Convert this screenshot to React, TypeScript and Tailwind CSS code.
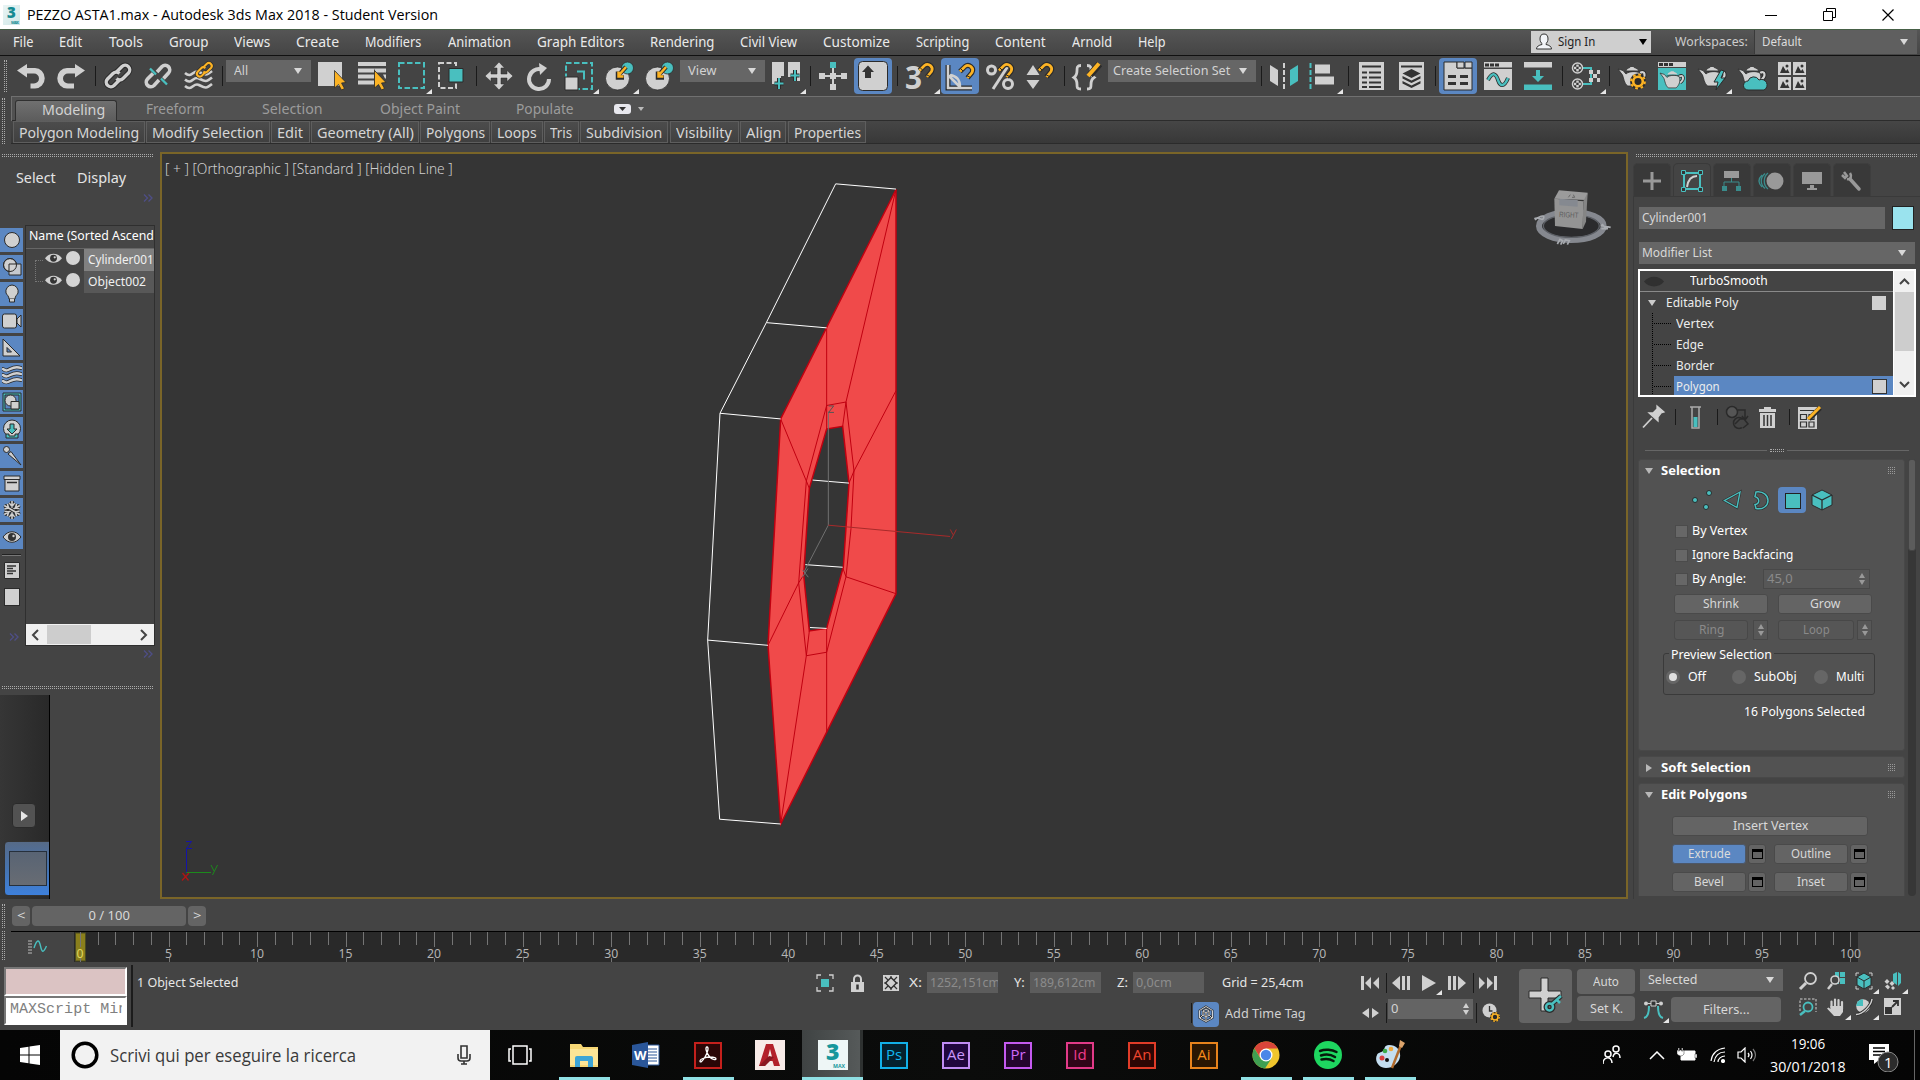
import { useLayoutEffect, useRef, useState } from "react";
import type { ReactNode } from "react";

const L = "#d0d0d0";
const D = "#2b2b2b";
const T = "#49bfbf";
const Y = "#fcb324";

/* Single line of text stretched to a given width */
function Fit({ w, children, className = "" }: { w: number; children: ReactNode; className?: string }) {
  const ref = useRef<HTMLSpanElement>(null);
  const [s, setS] = useState(1);
  useLayoutEffect(() => {
    if (ref.current && ref.current.offsetWidth) setS(w / ref.current.offsetWidth);
  }, [w]);
  return (
    <span className={"block shrink-0 whitespace-pre " + className} style={{ width: w }}>
      <span ref={ref} className="inline-block origin-left" style={{ transform: `scaleX(${s})` }}>
        {children}
      </span>
    </span>
  );
}

type Item = [number, number, ReactNode];

/* Flex row whose gaps come from the start and width of each item */
function Strip({ items, from = 0, className = "" }: { items: Item[]; from?: number; className?: string }) {
  let cur = from;
  return (
    <div className={"flex items-center " + className}>
      {items.map(([x, w, n], i) => {
        const m = x - cur;
        cur = x + w;
        return (
          <div key={i} className="flex shrink-0 items-center justify-center" style={{ marginLeft: m, width: w }}>
            {n}
          </div>
        );
      })}
    </div>
  );
}

const tx = (a: number, b: number, s: string, cls = ""): Item => [a, b - a, <Fit w={b - a} className={cls}>{s}</Fit>];

function Ic({ w = 28, h = 28, vb, fly, children }: { w?: number; h?: number; vb?: string; fly?: boolean; children: ReactNode }) {
  return (
    <div className="relative shrink-0">
      <svg width={w} height={h} viewBox={vb ?? `0 0 ${w} ${h}`} className="block overflow-visible" fill="none">
        {children}
      </svg>
      {fly && (
        <svg width="6" height="5" className="absolute -right-[6px] -bottom-[4px]" viewBox="0 0 6 5">
          <path d="M6 0V5H0Z" fill="#e6e6e6" />
        </svg>
      )}
    </div>
  );
}

const sep = (x: number, h = "h-5"): Item => [x, 2, <div className={"w-px bg-[#1a1a1a] " + h} />];
const Tri = ({ c = "#d8d8d8" }: { c?: string }) => (
  <svg width="8" height="6" viewBox="0 0 8 6"><path d="M0 0H8L4 6Z" fill={c} /></svg>
);
const GripV = ({ className = "" }: { className?: string }) => (
  <div className={"flex gap-px " + className}>
    <i className="w-px border-l border-dotted border-[#aaa]" /><i className="w-px border-l border-dotted border-[#aaa]" />
  </div>
);

const Chain = ({ c = L }: { c?: string }) => (
  <g>
    {[D, c].map((k, i) => (
      <g key={i} stroke={k} strokeWidth={i ? 3.4 : 5.4} fill="none">
        <path d="M12.5 10L18 4.5a4.6 4.6 0 0 1 6.5 6.5L19 16.500a4.600 4.600 0 0 1-6.500 0" />
        <path d="M15.500 18L10 23.500a4.600 4.600 0 0 1-6.500-6.500L9 11.500a4.600 4.600 0 0 1 6.500 0" />
      </g>
    ))}
  </g>
);
const Magnet = ({ x = 0, y = 0 }: { x?: number; y?: number }) => (
  <g transform={`translate(${x} ${y})`}>
    <path d="M1 8.500L6 3.500a4.700 4.700 0 0 1 7 6L8.500 15" stroke={D} strokeWidth="5" />
    <path d="M1 8.500L6 3.500a4.700 4.700 0 0 1 7 6L8.500 15" stroke={Y} strokeWidth="2.700" />
    <path d="M1.500 5.500l2.500 2.500M7.500 12.500l4 2" stroke={D} strokeWidth="1" />
  </g>
);
const Cursor = () => <path d="M16.500 8.500V26L20.500 22.500L23.500 28L26.500 26.500L23.500 21L28 20.500Z" fill={Y} stroke={D} strokeWidth=".8" />;
const Pot = () => (
  <g>
    <path d="M22 11c5-3 6.500 3 1 7" stroke={D} strokeWidth="4" />
    <path d="M22 11c5-3 6.500 3 1 7" stroke={L} strokeWidth="2.200" />
    <path d="M0 7l5 1.500L8 12c3-3 11-3 14-1c2 5 0 10-3.500 13h-9C6 21 6 17 4.500 13Z" fill={L} stroke={D} strokeWidth=".8" />
    <path d="M8.500 8.500C9 6.500 12 6.500 12.500 5h3c.5 1.500 4 1.500 4.500 3.500Z" fill={L} />
    <path d="M7.500 10.300C10 9 19 9 21.500 10.300" stroke={D} strokeWidth=".7" />
  </g>
);
const Gear = ({ x, y, r }: { x: number; y: number; r: number }) => (
  <g>
    <circle cx={x} cy={y} r={r} stroke={Y} strokeWidth={r * 0.55} />
    <circle cx={x} cy={y} r={r * 1.45} stroke={Y} strokeWidth={r * 0.4} strokeDasharray={`${r * 0.57} ${r * 0.57}`} />
  </g>
);
const Place = () => (
  <g>
    <ellipse cx="12.500" cy="16.500" rx="12" ry="11.500" fill={L} stroke={D} strokeWidth=".8" />
    <circle cx="22.500" cy="6" r="6" fill={T} stroke={D} strokeWidth=".8" />
    <path d="M21 5l-6 6.500M13 9.500v6h6" stroke={D} strokeWidth="4.500" />
    <path d="M21 5l-7 8M13.500 9.500v5h5" stroke={Y} strokeWidth="2.500" />
  </g>
);
const Combo = ({ w, tw, label }: { w: string; tw: number; label: string }) => (
  <div className={"flex h-[22px] -translate-y-[5px] items-center justify-between bg-[#666] pr-[9px] pl-2 text-[13px] text-[#d2d2d2] " + w}>
    <Fit w={tw}>{label}</Fit>
    <Tri />
  </div>
);
const Active = ({ children }: { children: ReactNode }) => (
  <div className="flex h-9 w-[38px] items-center justify-center rounded-[4px] bg-[#5b87c2]">{children}</div>
);

const toolbar: Item[] = [
  [3, 4, <GripV className="h-8" />],
  [17, 28, <Ic><path d="M0 8.500L10 2v4h8a9.500 10 0 0 1 0 20.500h-4.500v-5H17a5 5 0 0 0 0-10h-7v4Z" fill={L} /></Ic>],
  [57, 28, <Ic><path d="M28 8.500L18 2v4h-8a9.500 10 0 0 0 0 20.500h7v-5h-6a5 5 0 0 1 0-10h7v4Z" fill={L} /></Ic>],
  sep(94),
  [104, 28, <Ic><Chain /></Ic>],
  [144, 28, <Ic><g stroke={L} strokeWidth="3.600"><path d="M13 10L18 4.500a4.600 4.600 0 0 1 6.500 6.500L19.500 16.500M15 18L10 23.500a4.600 4.600 0 0 1-6.500-6.500L9 11.500" /></g><path d="M6 6.500l6 6M17 16.500l6 6" stroke={T} strokeWidth="2.300" /></Ic>],
  [184, 28, <Ic><g stroke={L} strokeWidth="2.600">{[12, 18.500, 25].map((y) => <path key={y} d={`M1 ${y - 1}c7 6 8-4 14-1s7 4 13-1`} />)}</g><g transform="translate(11.500 -1) scale(.63)"><Chain c={Y} /></g></Ic>],
  sep(221),
  [226, 85, <Combo w="w-[85px]" tw={14} label="All" />],
  [318, 28, <Ic><path d="M0 0h24v24H0z" fill={L} /><Cursor /></Ic>],
  [358, 28, <Ic><path d="M0 0h28v4H0zM0 6.500h16v4H0zM0 12.500h16v4H0zM0 18.500h16v4H0zM16 6.500h12v4H18zM25 12.500h3v4h-1z" fill={L} /><Cursor /></Ic>],
  [398, 28, <Ic fly><path d="M1 1h25v25H1z" stroke={T} strokeWidth="2" strokeDasharray="5.500 2.500" /></Ic>],
  [438, 28, <Ic><path d="M1 1h17v25H1z" stroke={L} strokeWidth="2" strokeDasharray="5 2.500" /><path d="M11 6.500h14V20H11z" fill={T} stroke={D} /></Ic>],
  sep(475),
  [485, 28, <Ic><path d="M14 0l5.500 6H16v6h6V8.500l6 5.500-6 5.500V16h-6v6h3.500L14 28l-5.500-6H12v-6H6v3.500L0 14l6-5.500V12h6V6H8.500Z" fill={L} stroke={D} strokeWidth=".5" /></Ic>],
  [525, 28, <Ic><path d="M17 7.500A10 10 0 1 0 24 17" stroke={L} strokeWidth="4" /><path d="M14 1l8 5-7 7Z" fill={L} /></Ic>],
  [565, 28, <Ic fly><path d="M1 1h26v26H1z" stroke={T} strokeWidth="2" strokeDasharray="5.500 2.500" /><path d="M0 15h13v13H0z" fill={L} stroke={D} /><path d="M12 9.500h7v8" stroke={T} strokeWidth="2" /></Ic>],
  [605, 28, <Ic fly><Place /></Ic>],
  [645, 28, <Ic><Place /></Ic>],
  [680, 85, <Combo w="w-[85px]" tw={28} label="View" />],
  [772, 28, <Ic fly><path d="M0 0h12v14H9v5H5v3H0zM16 0h12v19h-3v-4h-9z" fill={L} /><path d="M7 16v11M2.500 21.500h9M23 8v11M18.500 13.500h9" stroke={D} strokeWidth="4" /><path d="M7 16v11M2.500 21.500h9M23 8v11M18.500 13.500h9" stroke={T} strokeWidth="2" /></Ic>],
  sep(809),
  [819, 28, <Ic><path d="M3 14h22M14 4v22" stroke={L} strokeWidth="2" /><path d="M0 11h6v6H0zM22 11h6v6h-6zM11 22h6v6h-6zM11 11h6v6h-6z" fill={L} /><path d="M11 0h6v6h-6z" fill={T} /></Ic>],
  [854, 38, <Active><Ic w={30} h={30}><rect x=".5" y=".5" width="29" height="29" rx="4" fill={L} stroke={D} /><path d="M10 4.500l6 6.500h-3v6H7v-6H4Z" fill="#333" /></Ic></Active>],
  sep(896),
  [906, 28, <Ic fly><text x="-1" y="27" className="font-['Open_Sans'] text-[32px] font-bold" fill={L} textLength="17" lengthAdjust="spacingAndGlyphs">3</text><Magnet x={12.500} /></Ic>],
  [941, 38, <Active><Ic><path d="M2 3v23h24" stroke={D} strokeWidth="5" /><path d="M2 3v24M1 26h25M2 13l12 12M4 13c7 1 10 6 10 12" stroke={L} strokeWidth="2.500" /><Magnet x={13} y={1} /></Ic></Active>],
  [986, 28, <Ic><circle cx="5.500" cy="8" r="4" stroke={L} strokeWidth="3" /><circle cx="22" cy="22" r="4.500" stroke={L} strokeWidth="3" /><path d="M22 4L7 27" stroke={L} strokeWidth="3" /><Magnet x={12} /></Ic>],
  [1026, 28, <Ic><path d="M7 3l6.500 10H.5ZM7 27L.5 18h13Z" fill={L} /><Magnet x={12} /></Ic>],
  sep(1063),
  [1073, 28, <Ic><path d="M8 3.500c-4 0-4 2-4 5s0 5-3 7c3 2 3 4 3 7s0 4.500 4 4.500M14 3.500c4 0 4 2 4 5s0 5 3 7c-3 2-3 4-3 7s0 4.500-4 4.500" stroke={L} strokeWidth="2.800" /><path d="M26.500 2L17 13" stroke={D} strokeWidth="7" /><path d="M26 1.500L15 14" stroke={Y} strokeWidth="4" /></Ic>],
  [1108, 148, <div className="flex h-[22px] w-[148px] -translate-y-[5px] items-center justify-between bg-[#666] pr-[9px] pl-[5px] text-[13px] text-[#d2d2d2]"><Fit w={117}>Create Selection Set</Fit><Tri /></div>],
  sep(1260),
  [1270, 28, <Ic><path d="M0 3l8 5v16l-8-5Z" fill={L} /><path d="M14 1v26" stroke={L} strokeWidth="2" strokeDasharray="5 2" /><path d="M28 3l-8 5v16l8-5Z" fill={T} /></Ic>],
  [1309, 28, <Ic fly><path d="M1.500 1v26" stroke={T} strokeWidth="2" strokeDasharray="5 2" /><path d="M6 2.500h15v9H6zM6 14.500h19v8H6z" fill={L} /></Ic>],
  sep(1347),
  [1359, 25, <Ic w={25}><path d="M0 0h25v28H0z" fill={L} /><path d="M3 4.500h19" stroke="#333" strokeWidth="2" /><path d="M3 10.500h5M3 15.500h5M3 20.500h5M3 25h5M10 10.500h12M10 15.500h12M10 20.500h12M10 25h12" stroke="#333" strokeWidth="2" /></Ic>],
  [1399, 25, <Ic w={25}><path d="M0 0h25v28H0z" fill={L} /><path d="M2 4.500h21" stroke="#333" strokeWidth="2" /><path d="M12.500 7l9 4.500-9 4.500-9-4.500ZM3.500 14l9 4.500 9-4.500v2.500l-9 4.500-9-4.500ZM3.500 19l9 4.500 9-4.500v2.500l-9 4.500-9-4.500Z" fill="#333" /></Ic>],
  sep(1434),
  [1439, 38, <Active><Ic w={30} h={30}><path d="M1 1h13v6h15v22H1Z" fill={L} stroke={D} /><path d="M14 1h7v6h-7zM22 1h7v6h-7z" fill={L} stroke={D} /><path d="M5 14h8v3H5zM17 14h8v3h-8zM5 21h8v3H5zM17 21h8v3h-8z" fill="#333" /></Ic></Active>],
  [1484, 28, <Ic><path d="M0 0h28v5.500H0zM0 7h28v21H0z" fill={L} /><path d="M1 1.500h4v3H1zM6 1.500h4v3H6zM11 1.500h4v3h-4z" fill="#333" /><path d="M4 18c5-9 8-6 10 0s6 8 10-2" stroke={D} strokeWidth="4" /><path d="M4 18c5-9 8-6 10 0s6 8 10-2" stroke={T} strokeWidth="2.400" /></Ic>],
  [1524, 28, <Ic><path d="M0 0h28v5.500H0z" fill={L} /><path d="M0 22.500h28V28H0z" fill={T} /><path d="M12 8h4v6h4l-6 6-6-6h4z" fill={T} /></Ic>],
  sep(1561),
  [1572, 28, <Ic fly><path d="M11 6h8v16h-8" stroke={T} strokeWidth="2" /><circle cx="5.500" cy="6" r="5" fill="#333" stroke={L} strokeWidth="1.500" /><circle cx="5.500" cy="22" r="5" fill="#333" stroke={L} strokeWidth="1.500" /><path d="M2 6h7M5.500 2.500v7M2 22h7M5.500 18.500v7" stroke={L} strokeWidth="2.500" strokeDasharray="2.300" /><path d="M17 8h4v4h-4zM25 8h3v4h-3zM21 12h4v4h-4zM17 16h4v4h-4zM25 16h3v4h-3z" fill={L} /></Ic>],
  sep(1608),
  [1618, 28, <Ic><Pot /><circle cx="20" cy="19.500" r="8" fill={D} /><Gear x={20} y={19.500} r={4.800} /></Ic>],
  [1658, 28, <Ic><path d="M0 0h28v5H0z" fill={L} /><path d="M0 6h28v22H0z" fill={T} /><path d="M1 1h4v3H1zM6 1h4v3H6zM11 1h4v3h-4z" fill="#333" /><g transform="translate(2 5) scale(.87)"><Pot /></g></Ic>],
  [1698, 28, <Ic fly><Pot /><path d="M23 8l-7 12h4l-2 8 9-12h-4l3-7Z" fill={T} stroke={D} /></Ic>],
  [1738, 28, <Ic><Pot /><path d="M10 28a4.500 4.500 0 0 1 0-9a6 6 0 0 1 11-1a5 5 0 0 1 5 10Z" fill={T} stroke={D} /></Ic>],
  [1778, 28, <Ic>{[0, 15].map((x) => [0, 15].map((y) => <g key={x + "-" + y} transform={`translate(${x} ${y})`}><path d="M0 0h13v13H0z" fill={L} /><path d="M2 11L5 4l3 5 1.500-2 2 4z" fill="#333" /><circle cx="9" cy="4" r="1.500" fill="#333" /></g>))}</Ic>],
];

const menus: Item[] = [
  tx(13, 33, "File"), tx(59, 82, "Edit"), tx(109, 143, "Tools"), tx(169, 208, "Group"), tx(234, 270, "Views"),
  tx(296, 339, "Create"), tx(365, 421, "Modifiers"), tx(448, 511, "Animation"), tx(537, 624, "Graph Editors"),
  tx(650, 714, "Rendering"), tx(740, 797, "Civil View"), tx(823, 890, "Customize"), tx(916, 969, "Scripting"),
  tx(995, 1046, "Content"), tx(1072, 1112, "Arnold"), tx(1138, 1166, "Help"),
  [1531, 120, <div className="flex h-[22px] w-[120px] items-center bg-[#cfcfcf] pr-1 pl-[5px] text-[#222]">
    <svg width="16" height="17" viewBox="0 0 16 17"><path d="M8 1c3 0 4 2 4 5 0 2-1 4-2 4.500v1c3 .5 5.500 2 5.500 4.500H.5c0-2.500 2.500-4 5.500-4.500v-1C5 10 4 8 4 6c0-3 1-5 4-5Z" fill="#f2f4f8" stroke="#333" /></svg>
    <Fit w={37} className="ml-[6px] text-[13px] font-['Noto_Sans']">Sign In</Fit><span className="ml-auto"><Tri c="#000" /></span></div>],
  tx(1675, 1748, "Workspaces:", "text-[13px] text-[#ccc]"),
  [1754, 163, <div className="flex h-6 w-[163px] items-center justify-between border-l border-[#3a3a3a] bg-[#5f5f5f] pr-[9px] pl-[7px] text-[13px] text-[#ddd]"><Fit w={40}>Default</Fit><Tri /></div>],
];

const ribbon: [number, number, number, number, string][] = [
  [13, 145, 19, 139, "Polygon Modeling"], [146, 270, 152, 264, "Modify Selection"], [271, 310, 277, 303, "Edit"],
  [311, 419, 317, 414, "Geometry (All)"], [420, 490, 426, 485, "Polygons"], [491, 543, 497, 537, "Loops"],
  [544, 579, 550, 572, "Tris"], [580, 668, 586, 662, "Subdivision"], [670, 739, 676, 732, "Visibility"],
  [740, 786, 746, 781, "Align"], [788, 866, 794, 861, "Properties"],
];

const DotsH = ({ className = "" }: { className?: string }) => (
  <div className={"flex h-[3px] flex-col justify-between " + className}>
    <i className="block h-px border-t border-dotted border-[#aaa]" />
    <i className="block h-px border-t border-dotted border-[#aaa]" />
  </div>
);
const More = ({ className = "" }: { className?: string }) => (
  <svg width="10" height="8" viewBox="0 0 10 8" fill="none" stroke="#4e4e86" strokeWidth="1.300" className={"block shrink-0 " + className}>
    <path d="M1 .5L4.500 4 1 7.500M5.500 .5L9 4 5.500 7.500" />
  </svg>
);
const Eye = ({ w = 18, o = false }: { w?: number; o?: boolean }) => (
  <svg width={w} height={w * 0.62} viewBox="0 0 18 11" className="block shrink-0">
    <path d="M0 5.500C5-1 13-1 18 5.500C13 12 5 12 0 5.500Z" fill={L} stroke={o ? D : "none"} />
    <circle cx="9" cy="5.500" r="3.600" fill="#333" /><circle cx="10.300" cy="4.500" r="1.200" fill={L} />
  </svg>
);

const filters: ReactNode[] = [
  <circle cx="10" cy="10" r="7.500" fill={L} stroke={D} />,
  <g fill={L} stroke={D}><circle cx="8" cy="8" r="6.500" /><path d="M7 7h12v11H7z" fillOpacity=".9" /><circle cx="8" cy="8" r="6.500" fill="none" /></g>,
  <g fill={L} stroke={D}><path d="M10 1a6.500 6.500 0 0 1 6 8c-.8 2-3 3-3 6H7c0-3-2.200-4-3-6a6.500 6.500 0 0 1 6-8Z" /><path d="M7.500 15v3h5v-3" /></g>,
  <g fill={L} stroke={D}><rect x=".5" y="3" width="14" height="14" rx="2" /><path d="M15 8l4-4v12l-4-4Z" /></g>,
  <path d="M1 1v17h17ZM5 9.500L9.500 14H5Z" fill={L} stroke={D} fillRule="evenodd" />,
  <g strokeLinecap="round">{[4, 10, 16].map((y) => <g key={y}><path d={`M1 ${y}c6 5 8-5 18-1`} stroke={D} strokeWidth="4" /><path d={`M1 ${y}c6 5 8-5 18-1`} stroke={L} strokeWidth="2.400" /></g>)}</g>,
  <g stroke={D}><path d="M1 1h18v18H1z" fill={T} /><path d="M3 3h14v14H3z" fill="#5b87c2" /><circle cx="8.500" cy="8.500" r="5.500" fill={L} /><path d="M9 9.500h8V17H9z" fill={L} /></g>,
  <g stroke={D}><circle cx="10" cy="9.500" r="8.500" fill={L} /><path d="M4 15v4h12v-4h-3v2H7v-2Z" fill={T} /><path d="M8 5h4v5h3l-5 5-5-5h3Z" fill={T} /></g>,
  <g fill={L} stroke={D}><path d="M6 8L9 5.500L19 19Z" /><circle cx="4.500" cy="3.500" r="3" /></g>,
  <g fill={L} stroke={D}><path d="M3 6h14v12H3z" /><path d="M2 3h16v3.500H2z" /><path d="M5 9.500h10" strokeWidth="1.500" /></g>,
  <g>{[0, 60, 120].map((a) => <g key={a} transform={`rotate(${a} 10 10)`}><path d="M10 1v18M7 3l3 3 3-3M7 17l3-3 3 3" stroke={D} strokeWidth="3.400" /><path d="M10 1v18M7 3l3 3 3-3M7 17l3-3 3 3" stroke={L} strokeWidth="1.600" /></g>)}</g>,
  <g><path d="M1 10C6 3 14 3 19 10C14 17 6 17 1 10Z" fill={L} stroke={D} /><circle cx="10" cy="10" r="4" fill="#333" /><circle cx="11.500" cy="9" r="1.200" fill={L} /></g>,
];

function LeftPanel() {
  return (
    <div className="flex w-[160px] shrink-0 flex-col overflow-hidden">
      <DotsH className="mt-[10px] ml-[2px] w-[151px]" />
      <Strip className="mt-[10px] h-[20px] text-[15px] text-[#e4e4e4]" items={[tx(16, 56, "Select"), tx(77, 126, "Display")]} />
      <More className="mt-[7px] ml-[143px]" />
      <div className="mt-[23px] flex h-[421px]">
        <div className="flex w-[23px] shrink-0 flex-col pt-[3px]">
          {filters.map((f, i) => (
            <div key={i} className="mb-[3px] flex h-6 w-[23px] shrink-0 items-center justify-center bg-[#5b87c2]">
              <svg width="20" height="20" viewBox="0 0 20 20" fill="none">{f}</svg>
            </div>
          ))}
          <div className="mt-[2px] ml-[2px] h-[2px] w-[19px] border-t border-[#222] bg-[#777]" />
          <svg width="16" height="17" className="mt-[6px] ml-1 block shrink-0" viewBox="0 0 16 17"><path d="M.5.5h15v16H.5z" fill={L} stroke={D} /><path d="M3 4h9M3 6.500h6M3 9h9M3 11.500h6" stroke="#333" strokeWidth="1.300" /></svg>
          <div className="mt-[9px] ml-1 h-[18px] w-4 shrink-0 border border-[#2b2b2b] bg-[#d0d0d0]" />
          <More className="mt-[27px] ml-[9px]" />
        </div>
        <div className="ml-[2px] flex w-[130px] flex-col border border-[#2f2f2f]">
          <div className="flex h-[23px] shrink-0 items-center overflow-hidden border-b border-[#666] bg-[#464646] pb-[3px] pl-[3px] text-[13px] text-white">
            <Fit w={125}>Name (Sorted Ascend</Fit>
          </div>
          {[["Cylinder001", 66, "bg-[#808080]"], ["Object002", 58, "bg-[#585858]"]].map(([n, w, c], i) => (
            <div key={i} className="flex h-[22px] shrink-0 items-center">
              <div className={"ml-[9px] h-[22px] w-[8px] border-l border-dotted border-[#777] " + (i ? "-translate-y-[11px] border-b" : "translate-y-[11px] border-t")} />
              <span className="ml-[2px] -translate-y-[2px]"><Eye w={17} /></span>
              <span className="ml-[4px] h-[14px] w-[14px] shrink-0 -translate-y-[2px] rounded-full bg-[#d4d4d4]" />
              <div className={"ml-1 flex h-full flex-1 items-center overflow-hidden pl-[4px] text-[13px] text-[#f0f0f0] " + c}><Fit w={w as number}>{n}</Fit></div>
            </div>
          ))}
          <div className="mt-auto flex h-[21px] items-center bg-[#f0f0f0]">
            <svg width="21" height="12" viewBox="0 0 21 12" fill="none" stroke="#444" strokeWidth="2"><path d="M12 1L7 6l5 5" /></svg>
            <div className="h-[19px] w-[44px] bg-[#cdcdcd]" />
            <svg width="21" height="12" viewBox="0 0 21 12" fill="none" stroke="#444" strokeWidth="2" className="ml-auto"><path d="M8 1l5 5-5 5" /></svg>
          </div>
        </div>
      </div>
      <More className="mt-[4px] ml-[143px]" />
      <DotsH className="mt-[28px] ml-[2px] w-[151px]" />
      <div className="mt-[6px] flex w-[50px] flex-1 flex-col overflow-hidden border-r border-black bg-linear-to-r from-[#363636] to-[#292929] pt-[108px]">
        <div className="ml-3 flex h-[25px] w-6 shrink-0 items-center justify-center rounded-[4px] border border-[#2a2a2a] bg-[#525252]">
          <svg width="7" height="10"><path d="M0 0L7 5L0 10Z" fill="#e6e6e6" /></svg>
        </div>
        <div className="mt-[13px] ml-1 h-[55px] w-[46px] shrink-0 rounded-l-[4px] border border-[#333] bg-linear-to-b from-[#566a87] via-[#4674b0] to-[#3d80dc] pt-[9px] pl-1">
          <div className="h-[35px] w-[38px] border border-[#26303c] bg-linear-to-b from-[#586474] to-[#686c73]" />
        </div>
      </div>
    </div>
  );
}

function Viewport() {
  const ns = { vectorEffect: "non-scaling-stroke" as const };
  return (
    <div className="relative h-[747px] w-[1468px] shrink-0 self-end border-2 border-[#7a6528] bg-[#353535]">
      <svg width="1464" height="743" className="block" fill="none">
        <g transform="translate(518 6) scale(.33333 .4337)" strokeWidth="1">
          <path {...ns} fillRule="evenodd" fill="#f04a4a" stroke="#c00010" strokeWidth="1.500" d="M648 68V1000L302 1531L264 1119L302 597ZM440 620L488 614L507 745L490 938L440 1080L388 1086L371 957L388 757Z" />
          <g stroke="#c00010">
            {["M440 566L498 558L522 717L513 850L498 961L440 1135L379 1143L356 975L379 740Z", "M498 558L488 614M522 717L507 745M498 961L488 940M379 740L388 757M371 957L356 975M388 1086L379 1143M440 1080V1320M440 387V620", "M648 68L498 558M302 597L379 740M264 1119L356 975M302 1531L379 1143M498 961L648 1000M522 717L648 532"].map((d) => <path key={d} {...ns} d={d} />)}
          </g>
          <path {...ns} stroke="#fff" d="M648 67L467 55L259 375L120 584L83 1107L119 1520L302 1531M259 375L440 387M120 584L302 597M83 1107L264 1119M398 738L507 745M376 933L488 939M390 1078L440 1080" />
          <path {...ns} stroke="#707070" d="M445 580V842L372 950M367 945L385 962M384 942L367 962" />
          <path {...ns} stroke="#555" d="M446 567H461L446 582H462" />
          <path {...ns} stroke="#a82a2a" d="M445 842L810 868M811 852L819 864M829 852L814 874" />
        </g>
        <g>
          <path d="M24.500 718.500V695" stroke="#1414a8" /><path d="M24.500 718.500H49" stroke="#1c8a1c" />
          <path d="M24 687.500h5.500l-5 7h5.500" stroke="#1414a8" />
          <path d="M49 711l3 6M55.500 711l-5 10" stroke="#1c8a1c" />
          <path d="M20.500 719l6 7.500M27 719l-7 7.500" stroke="#b01414" strokeWidth="1.300" />
        </g>
        <g transform="translate(1338 -4) scale(.33333)">
          <ellipse cx="214" cy="228" rx="97" ry="42" fill="#2b2b2d" stroke="#85888f" strokeWidth="18" />
          <ellipse cx="214" cy="228" rx="84" ry="34" stroke="#5d6066" strokeWidth="4" />
          <path d="M163 146L177 121L263 128L258 150Z" fill="#9b9b9b" />
          <path d="M163 146L250 154L248 237L165 228Z" fill="#949494" />
          <path d="M250 154L263 128L258 215L248 237Z" fill="#858585" />
          <path d="M178 146l55 4v20l-55-4Z" fill="#858990" />
          <text x="177" y="201" className="font-['Liberation_Sans'] text-[23px]" fill="#5c5c5c" textLength="58" lengthAdjust="spacingAndGlyphs" transform="rotate(3 177 201)">RIGHT</text>
          <g stroke="#a8abb0" strokeWidth="5"><path d="M103 206c14-8 24 10 28-2s-16-4-26 6M302 226l30 6M304 236l20 0M306 222l14 16M172 282l8-14 8 4-6 12M190 282l6-12 12 2-6 12" /></g>
          <path d="M205 142l6-8M216 142h8l-4-8" stroke="#666" strokeWidth="3" />
        </g>
      </svg>
      <div className="absolute top-[5px] left-[3px] text-[14px] leading-5 font-light text-[#d0d0d0]">
        <Fit w={288}>[ + ] [Orthographic ] [Standard ] [Hidden Line ]</Fit>
      </div>
    </div>
  );
}

const Btn = ({ w, children, blue, dim }: { w: string; children: ReactNode; blue?: boolean; dim?: boolean }) => (
  <div className={"flex h-5 shrink-0 items-center justify-center rounded-[3px] border text-[13px] " + w + (blue ? " border-[#4c5768] bg-[#5b87c2] text-[#dcdcdc]" : dim ? " border-[#484848] bg-[#565656] text-[#8a8a8a]" : " border-[#4a4a4a] bg-[#646464] text-[#d8d8d8]")}>
    {children}
  </div>
);
const Spin = ({ c = "#999" }: { c?: string }) => (
  <svg width="6" height="12" viewBox="0 0 6 12"><path d="M3 0l3 5H0ZM3 12L0 7h6Z" fill={c} /></svg>
);
const SpinBox = () => <div className="flex h-5 w-[15px] items-center justify-center border border-[#484848] bg-[#575757]"><Spin /></div>;
const Check = () => <div className="h-[13px] w-[13px] border border-[#4b4b4b] bg-[#676767]" />;
const Radio = ({ on }: { on?: boolean }) => (
  <div className="flex h-[14px] w-[14px] items-center justify-center rounded-full bg-[#666]">{on && <i className="h-2 w-2 rounded-full bg-[#e0e0e0]" />}</div>
);
const Sett = () => <Btn w="w-[18px]"><i className="h-[10px] w-[11px] border border-t-[3px] border-black" /></Btn>;
const Dots = () => (
  <svg width="8" height="8" viewBox="0 0 8 8"><path d="M.5 0v8M2.500 0v8M4.500 0v8M6.500 0v8" stroke="#999" strokeDasharray="1 1" /></svg>
);
const Head = ({ w, open, children }: { w: number; open?: boolean; children: string }) => (
  <Strip from={1639} className="h-[22px] text-[13px] font-bold text-white" items={[
    [1645, 8, <svg width="8" height="8" viewBox="0 0 8 8"><path d={open ? "M0 1H8L4 7Z" : "M1 0V8L7 4Z"} fill="#b8b8b8" /></svg>],
    [1661, w, <Fit w={w}>{children}</Fit>],
    [1888, 8, <Dots />],
  ]} />
);

const cmdTabs: ReactNode[] = [
  <path d="M10 1v18M1 10h18" stroke="#999" strokeWidth="3" />,
  <g stroke={T} strokeWidth="2"><path d="M2 2h16v16H2z" /><path d="M5 16C6 9 9 5 15 5" stroke={L} /><g fill="#333" strokeWidth="1"><path d="M-.5-.5h4v4h-4zM16.500-.5h4v4h-4zM-.5 16.500h4v4h-4zM16.500 16.500h4v4h-4z" /></g></g>,
  <g><path d="M2 0h15v7H2z" fill="#999" /><path d="M9.500 7v4M2 15v-4h15v4" stroke="#3a8c8c" /><path d="M0 15h5v5H0zM14 15h5v5h-5z" fill="#3a8c8c" /></g>,
  <g><circle cx="13" cy="10" r="8.500" fill="#999" /><path d="M6 2C1 6 1 14 6 18M3 2.500C-2 7-2 13 3 17.500M0 4C-4 8-4 12 0 16" stroke="#3a8c8c" strokeWidth="1.300" /></g>,
  <path d="M0 1h20v12H0zM8 14h4v3h3v2H5v-2h3z" fill="#999" />,
  <g stroke="#999"><path d="M8 8l9 10" strokeWidth="3.500" strokeLinecap="round" /><path d="M2 1l3 4-2 2-3-3M5 8c4 1 5-3 3-6" strokeWidth="2.500" /></g>,
];

function CommandPanel() {
  const row = "text-[13px] text-[#ececec] h-[21px]";
  return (
    <div className="flex w-[292px] shrink-0 flex-col pl-[5px]">
      <DotsH className="mt-[10px] ml-[3px] w-[281px]" />
      <div className="mt-[6px] flex h-[33px] gap-[2px]">
        {cmdTabs.map((t, i) => (
          <div key={i} className={"flex w-[38px] items-center justify-center rounded-t-[5px] border border-b-0 pt-[2px] " + (i === 1 ? "border-[#3a3a3a] bg-[#444]" : "border-[#3e3e3e] bg-[#393939]")}>
            <svg width="20" height="20" viewBox="0 0 20 20" fill="none" className="overflow-visible">{t}</svg>
          </div>
        ))}
      </div>
      <div className="flex flex-1 flex-col overflow-hidden border-t border-l border-[#3a3a3a]">
        <div className="mt-[9px] ml-[5px] flex h-[24px] items-center">
          <div className="flex h-[22px] w-[246px] items-center bg-[#666] pl-[3px] text-[13px] text-[#d8d8d8]"><Fit w={66}>Cylinder001</Fit></div>
          <div className="ml-[7px] h-6 w-[22px] border border-[#222] bg-[#9ae3ee]" />
        </div>
        <div className="mt-[12px] ml-[5px] flex h-[22px] w-[276px] items-center justify-between bg-[#666] pr-[9px] pl-[3px] text-[13px] text-[#d8d8d8]">
          <Fit w={70}>Modifier List</Fit><Tri />
        </div>
        <div className="mt-[5px] ml-1 flex h-[128px] w-[278px] shrink-0 border-2 border-white bg-[#444]">
          <div className="flex flex-1 flex-col overflow-hidden">
            <Strip from={1640} className="h-[21px] shrink-0 border-b border-[#8a8a8a] text-[13px] text-white" items={[
              [1644, 20, <svg width="20" height="11"><path d="M0 5.500C5-1 15-1 20 5.500C15 12 5 12 0 5.500Z" fill="#303030" /></svg>],
              tx(1690, 1768, "TurboSmooth"),
            ]} />
            <Strip from={1640} className={row + " shrink-0"} items={[[1648, 8, <Tri c="#ccc" />], tx(1666, 1738, "Editable Poly"), [1872, 14, <i className="h-[14px] w-[14px] bg-[#d0d0d0]" />]]} />
            <div className="relative flex flex-col">
              <i className="absolute top-0 left-3 h-[83px] border-l border-dotted border-black" />
              {([["Vertex", 38], ["Edge", 28], ["Border", 38], ["Polygon", 44]] as [string, number][]).map(([n, w], i) => (
                <div key={n} className={row + " flex shrink-0 items-center"}>
                  <i className="ml-[14px] w-[17px] border-t border-dotted border-black" />
                  <div className={"ml-[3px] flex h-[21px] flex-1 items-center pl-[2px] " + (i === 3 ? "bg-[#5b87c2]" : "")}>
                    <Fit w={w}>{n}</Fit>
                    {i === 3 && <i className="mr-[6px] ml-auto h-[15px] w-[15px] border border-[#333] bg-[#d0d0d0]" />}
                  </div>
                </div>
              ))}
            </div>
          </div>
          <div className="flex w-[21px] shrink-0 flex-col items-center justify-between border-l border-white bg-[#f0f0f0]">
            <svg width="19" height="21" viewBox="0 0 19 21" fill="none" stroke="#444" strokeWidth="2"><path d="M5 13l4.500-4.500L14 13" /></svg>
            <div className="mb-auto h-[59px] w-[19px] bg-[#cdcdcd]" />
            <svg width="19" height="21" viewBox="0 0 19 21" fill="none" stroke="#444" strokeWidth="2"><path d="M5 8l4.500 4.500L14 8" /></svg>
          </div>
        </div>
        <Strip from={1634} className="mt-[8px] h-6" items={[
          [1643, 21, <Ic w={21} h={22}><path d="M14 0l7 6-3 1-3 4v4L6 7h4l4-4Z" fill={L} stroke={L} strokeWidth="1.300" /><path d="M9 12L0 21.500" stroke={L} strokeWidth="1.800" /></Ic>],
          sep(1674, "h-4"),
          [1690, 11, <Ic w={11} h={23}><path d="M0 1h11M2 1v21h7V1" stroke="#aaa" strokeWidth="1.500" /><path d="M3.500 11h4v10h-4z" fill={T} /></Ic>],
          sep(1716, "h-4"),
          [1726, 23, <Ic w={23} h={23}><g fill="#444" stroke="#2a2a2a" strokeWidth="1.500"><circle cx="6" cy="6" r="5.500" fill="#555" /><circle cx="13" cy="17" r="5.500" /><path d="M9 18l5-5h4l4 5-5 4M12 4h7v9M16 10l3 4 3-4" /></g></Ic>],
          [1759, 17, <Ic w={17} h={23}><path d="M0 3h17v3H0zM5 1h7v2H5z" fill={L} /><path d="M1 7h15v15H1z" fill={L} /><path d="M5 9v11M8.500 9v11M12 9v11" stroke="#333" strokeWidth="1.500" /></Ic>],
          sep(1788, "h-4"),
          [1798, 23, <Ic w={23} h={23}><path d="M0 1h19v22H0z" fill={L} /><path d="M2 4.500h14M2.500 8.500h6v5h-6zM11 8.500h5v5h-5zM2.500 16h6v5h-6zM11 16h5v5h-5z" stroke="#333" strokeWidth="1.200" /><path d="M22 2L11 13" stroke={D} strokeWidth="5" /><path d="M22 1L10 13" stroke={Y} strokeWidth="3" /></Ic>],
        ]} />
        <div className="mt-[20px] ml-[11px] flex w-[264px] items-center">
          <i className="h-px flex-1 bg-[#666]" /><DotsH className="mx-[3px] w-[14px]" /><i className="h-px flex-1 bg-[#666]" />
        </div>
        <div className="mt-[7px] flex h-[437px] shrink-0">
          <div className="ml-1 flex w-[267px] shrink-0 flex-col gap-[5px] overflow-hidden">
            <div className="flex h-[292px] shrink-0 flex-col rounded-[3px] border border-[#484848] bg-[#525252]">
              <Head w={59} open>Selection</Head>
              <Strip from={1639} className="mt-[4px] h-[28px] shrink-0" items={[
                [1692, 20, <Ic w={20} h={20}><g fill={T} stroke={D}><circle cx="3" cy="10" r="2.500" /><circle cx="17" cy="3" r="2.500" /><circle cx="14" cy="17" r="2.500" /></g></Ic>],
                [1723, 19, <Ic w={19} h={18}><path d="M17 1L1.500 9.500L14 16.500Z" stroke={D} strokeWidth="2.500" /><path d="M17 1L1.500 9.500L14 16.500Z" stroke={T} strokeWidth="1.400" /></Ic>],
                [1753, 18, <Ic w={18} h={19}><path d="M3 1c8-1 12 4 12 8.500S11 19 3 17.500l-1-4c5-1 5-6 0-8Z" stroke={D} strokeWidth="2.800" /><path d="M3 1c8-1 12 4 12 8.500S11 19 3 17.500l-1-4c5-1 5-6 0-8Z" stroke={T} strokeWidth="1.500" /></Ic>],
                [1778, 28, <div className="flex h-[26px] w-7 items-center justify-center rounded-[4px] bg-[#5b87c2]"><i className="mt-[2px] ml-[2px] h-4 w-4 border border-[#222] bg-[#49bfbf]" /></div>],
                [1812, 20, <Ic w={20} h={20}><path d="M10 0l10 5v10l-10 5L0 15V5Z" fill={T} stroke={D} /><path d="M0 5l10 5 10-5M10 10v10" stroke={D} strokeWidth="1.300" /></Ic>],
              ]} />
              <Strip from={1639} className="mt-[5px] h-6 shrink-0 text-[13px] text-white" items={[[1675, 13, <Check />], tx(1692, 1747, "By Vertex")]} />
              <Strip from={1639} className="h-6 shrink-0 text-[13px] text-white" items={[[1675, 13, <Check />], tx(1692, 1793, "Ignore Backfacing")]} />
              <Strip from={1639} className="h-6 shrink-0 text-[13px] text-white" items={[[1675, 13, <Check />], tx(1692, 1746, "By Angle:"), [1763, 107, <div className="flex h-5 w-[107px] items-center justify-between border border-[#484848] bg-[#575757] pr-1 pl-[3px] text-[#8a8a8a]"><Fit w={26}>45,0</Fit><Spin /></div>]]} />
              <Strip from={1639} className="mt-[3px] h-5 shrink-0" items={[[1674, 94, <Btn w="w-[94px]"><Fit w={36}>Shrink</Fit></Btn>], [1778, 94, <Btn w="w-[94px]"><Fit w={30}>Grow</Fit></Btn>]]} />
              <Strip from={1639} className="mt-[6px] h-5 shrink-0" items={[[1674, 74, <Btn dim w="w-[74px]"><Fit w={25}>Ring</Fit></Btn>], [1753, 15, <SpinBox />], [1778, 76, <Btn dim w="w-[76px]"><Fit w={27}>Loop</Fit></Btn>], [1857, 15, <SpinBox />]]} />
              <fieldset className="relative mt-[13px] ml-[24px] h-[42px] w-[212px] shrink-0 rounded-[3px] border-[1.5px] border-[#3a3a3a] text-[13px] text-white">
                <div className="absolute -top-[9px] left-[5px] bg-[#525252] px-[2px] leading-[18px]"><Fit w={101}>Preview Selection</Fit></div>
                <Strip from={1664} className="h-[45px]" items={[[1666, 14, <Radio on />], tx(1688, 1706, "Off"), [1732, 14, <Radio />], tx(1754, 1797, "SubObj"), [1814, 14, <Radio />], tx(1836, 1864, "Multi")]} />
              </fieldset>
              <Strip from={1639} className="mt-[7px] h-5 shrink-0 text-[13px] text-white" items={[tx(1744, 1865, "16 Polygons Selected")]} />
            </div>
            <div className="h-[22px] shrink-0 rounded-[3px] border border-[#484848] bg-[#525252]"><Head w={90}>Soft Selection</Head></div>
            <div className="flex flex-1 flex-col rounded-t-[3px] border border-b-0 border-[#484848] bg-[#525252]">
              <Head w={86} open>Edit Polygons</Head>
              <Strip from={1639} className="mt-[10px] h-5" items={[[1672, 196, <Btn w="w-[196px]"><Fit w={75}>Insert Vertex</Fit></Btn>]]} />
              <Strip from={1639} className="mt-[8px] h-5" items={[[1672, 74, <Btn blue w="w-[74px]"><Fit w={43}>Extrude</Fit></Btn>], [1748, 18, <Sett />], [1774, 74, <Btn w="w-[74px]"><Fit w={40}>Outline</Fit></Btn>], [1850, 18, <Sett />]]} />
              <Strip from={1639} className="mt-[8px] h-5" items={[[1672, 74, <Btn w="w-[74px]"><Fit w={30}>Bevel</Fit></Btn>], [1748, 18, <Sett />], [1774, 74, <Btn w="w-[74px]"><Fit w={28}>Inset</Fit></Btn>], [1850, 18, <Sett />]]} />
            </div>
          </div>
          <div className="ml-[3px] w-[8px] rounded-full bg-[#373737]"><div className="h-[92px] rounded-[3px] border border-[#444] bg-[#5c5c5c]" /></div>
        </div>
      </div>
    </div>
  );
}

function TrackBar() {
  const at = (i: number) => 6 + i * 17.705;
  return (
    <div className="flex h-[31px] shrink-0">
      <GripV className="mr-[6px] ml-[2px] h-[29px]" />
      <div className="flex w-[63px] items-center border-t border-black pl-[17px]">
        <svg width="19" height="14" viewBox="0 0 19 14" fill="none"><path d="M0 1h4M0 4h4M0 7h4M0 10h4M0 13h4" stroke="#bbb" /><path d="M6 8c3-9 5-9 6.500-2s3 7 6 0" stroke={T} strokeWidth="1.400" /></svg>
      </div>
      <div className="w-[1784px] border-t border-black bg-[#292929]">
        <svg width="1784" height="30" className="block overflow-visible">
          <rect x="1.500" y="1" width="10" height="28" fill="#8a7f1c" stroke="#4a4a20" />
          {Array.from({ length: 101 }, (_, i) => (
            <path key={i} d={i % 5 ? `M${Math.round(at(i)) + 0.5} 0v13` : `M${Math.round(at(i)) + 0.5} 0v15m0 11v4`} stroke="#757575" />
          ))}
          {Array.from({ length: 21 }, (_, i) => (
            <text key={i} x={at(i * 5)} y="26" textAnchor="middle" textLength={i === 20 ? 21 : i < 2 ? 7 : 14} lengthAdjust="spacingAndGlyphs" className="font-['Noto_Sans'] text-[13px]" fill={i ? "#b4b4b4" : "#e0d860"}>{i * 5}</text>
          ))}
        </svg>
      </div>
      <div className="flex-1 border-t border-black" />
    </div>
  );
}

const Field = ({ w, children }: { w: number; children: string }) => (
  <div className="flex h-[21px] w-[71px] items-center overflow-hidden bg-[#5c5c5c] pl-[3px] text-[#8c8c8c]"><Fit w={w}>{children}</Fit></div>
);
const Key = ({ w, h, children }: { w: string; h: string; children: ReactNode }) => (
  <div className={"flex items-center justify-center rounded-[4px] bg-[#646464] text-[13px] text-[#d8d8d8] " + w + " " + h}>{children}</div>
);

function Status() {
  return (
    <div className="flex h-[68px] shrink-0">
      <div className="mt-[5px] ml-[4px] flex h-[58px] w-[123px] shrink-0 flex-col">
        <div className="h-[29px] border-2 border-t-[#777] border-r-white border-b-white border-l-[#777] bg-[#dbc3c3]" />
        <div className="flex h-[29px] overflow-hidden border-2 border-t-[#777] border-r-white border-b-white border-l-[#777] bg-white pl-[4px] font-['Liberation_Mono'] text-[14px] leading-[22px] text-[#808080]">
          <span className="w-[112px] overflow-hidden whitespace-nowrap"><Fit w={117}>MAXScript Min</Fit></span>
        </div>
      </div>
      <div className="mt-[3px] ml-[4px] h-[62px] w-[2px] bg-[#1c1c1c]" />
      <div className="flex w-[1386px] flex-col">
        <Strip from={133} className="mt-[8px] h-[25px] text-[13px] text-[#e6e6e6]" items={[
          tx(137, 238, "1 Object Selected"),
          [816, 18, <Ic w={18} h={18}><path d="M1 5V1h4M13 1h4v4M17 13v4h-4M5 17H1v-4" stroke={L} strokeWidth="1.300" /><path d="M5 5h8v8H5z" fill={T} /></Ic>],
          [851, 13, <Ic w={13} h={18}><path d="M3 9V5a3.500 3.500 0 0 1 7 0v4" stroke={L} strokeWidth="2" /><path d="M0 8h13v10H0z" fill={L} /><path d="M6.500 10.500v5" stroke="#333" strokeWidth="2.500" /></Ic>],
          [883, 16, <Ic w={16} h={16}><path d="M0 0h16v16H0z" fill={L} /><path d="M8 2.500L13.500 8L8 13.500L2.500 8Z" stroke="#333" strokeWidth="1.500" /><path d="M2 2l3 3M14 2l-3 3M2 14l3-3M14 14l-3-3M8 1v3M8 12v3M1 8h3M12 8h3" stroke="#333" strokeWidth="1.200" /></Ic>],
          tx(909, 922, "X:"), [927, 71, <Field w={70}>1252,151cm</Field>],
          tx(1014, 1025, "Y:"), [1030, 71, <Field w={63}>189,612cm</Field>],
          tx(1117, 1128, "Z:"), [1133, 71, <Field w={36}>0,0cm</Field>],
          tx(1222, 1304, "Grid = 25,4cm"),
          [1361, 18, <Ic w={18} h={14}><path d="M0 0h3v14H0zM10 1v12L4 7ZM18 1v12l-6-6Z" fill={L} /></Ic>],
          sep(1385),
          [1392, 18, <Ic w={18} h={14}><path d="M8 0v14L0 7ZM10 0h3v14h-3zM15 0h3v14h-3z" fill={L} /></Ic>],
          [1422, 14, <Ic w={14} h={16} fly><path d="M0 0l14 8L0 16Z" fill={L} /></Ic>],
          [1448, 18, <Ic w={18} h={14}><path d="M10 0v14l8-7ZM0 0h3v14H0zM5 0h3v14H5z" fill={L} /></Ic>],
          sep(1472),
          [1479, 18, <Ic w={18} h={14}><path d="M15 0h3v14h-3zM8 1v12l6-6ZM0 1v12l6-6Z" fill={L} /></Ic>],
        ]} />
        <Strip from={133} className="mt-[3px] h-[30px] text-[13px] text-[#d2d2d2]" items={[
          sep(1190), [1193, 26, <div className="mt-[2px] flex h-[25px] w-[26px] items-center justify-center rounded-[4px] bg-[#5b87c2]"><Ic w={16} h={16}><path d="M8 .5l6.500 4v7.500L8 15.500L1.500 12V4.500ZM5 5l3-2 3 2v4l-3 2-3-2ZM5 5l3 2 3-2M8 7v8M5 9l-3 3M11 9l3 3" stroke={D} strokeWidth="2" /><path d="M8 .5l6.500 4v7.500L8 15.500L1.500 12V4.500ZM5 5l3-2 3 2v4l-3 2-3-2ZM5 5l3 2 3-2M8 7v8M5 9l-3 3M11 9l3 3" stroke={L} /></Ic></div>],
          tx(1225, 1306, "Add Time Tag", "pt-[2px]"),
          [1362, 17, <Ic w={17} h={10}><path d="M7 0v10L0 5ZM10 0v10l7-5Z" fill={L} /></Ic>],
          sep(1385),
          [1388, 85, <div className="-mt-[8px] flex h-5 w-[85px] items-center justify-between bg-[#646464] pr-1 pl-[3px]"><Fit w={7}>0</Fit><Spin c={L} /></div>],
          sep(1475),
          [1482, 18, <Ic w={18} h={18}><circle cx="7.500" cy="6.500" r="7" fill={L} /><path d="M7.500 2v5h3" stroke="#333" strokeWidth="1.300" /><circle cx="13" cy="13" r="5" fill={D} /><Gear x={13} y={13} r={3} /></Ic>],
        ]} />
      </div>
      <div className="mt-[7px]"><Key w="w-[53px]" h="h-[54px]">
        <Ic w={34} h={36}><path d="M12 0h7v13h13v7H19v13h-7V20H0v-7h12z" fill={L} stroke={D} /><g stroke={D} strokeWidth="5"><circle cx="20.500" cy="29" r="3.500" /><path d="M23 26l9-8" /></g><g stroke={T} strokeWidth="2.500"><circle cx="20.500" cy="29" r="3.500" /><path d="M23 26l9-8M28 22l3 3" /></g></Ic>
      </Key></div>
      <div className="mt-[7px] ml-[5px] flex flex-col gap-[2px]">
        <Key w="w-[58px]" h="h-[25px]"><Fit w={26}>Auto</Fit></Key>
        <Key w="w-[58px]" h="h-[25px]"><Fit w={33}>Set K.</Fit></Key>
      </div>
      <div className="mt-[7px] ml-[5px] flex w-[143px] flex-col">
        <div className="flex h-[22px] items-center justify-between bg-[#646464] pr-[9px] pl-2 text-[13px] text-[#d8d8d8]"><Fit w={49}>Selected</Fit><Tri /></div>
        <div className="mt-[6px] flex items-center pl-[4px]">
          <Ic w={19} h={18} fly><path d="M4 2.500h11" stroke={L} /><path d="M7 0h5v5H7z" fill="#333" stroke={L} /><circle cx="2" cy="2.500" r="2" fill={L} /><circle cx="17" cy="2.500" r="2" fill={L} /><path d="M0 17c5-1 5-8 5-12M19 17c-5-1-5-8-5-12" stroke={T} strokeWidth="2" /></Ic>
          <div className="ml-[8px]"><Key w="w-[110px]" h="h-[25px]"><Fit w={47}>Filters...</Fit></Key></div>
        </div>
      </div>
      <div className="mt-[10px] ml-[16px] grid h-[44px] grid-cols-[28px_28px_29px_19px] grid-rows-[26px_18px]">
        <Ic w={18} h={18}><circle cx="11.500" cy="6.500" r="5.500" stroke={L} strokeWidth="1.800" /><path d="M7 11l-6 6" stroke={L} strokeWidth="3" /></Ic>
        <Ic w={18} h={18}><path d="M8 0h4v5H8zM13 0h5v5h-5zM8 6h4v6H8zM13 6h5v6h-5z" fill={T} /><circle cx="8" cy="8" r="4" fill="#444" stroke={L} strokeWidth="1.600" /><path d="M5 12l-4 5" stroke={L} strokeWidth="2.500" /></Ic>
        <div className="w-[18px]"><Ic w={18} h={18} fly><path d="M1 4V1h3M14 1h3v3M17 14v3h-3M4 17H1v-3" stroke={L} /><path d="M9 1l7 4v8l-7 4-7-4V5Z" fill={T} stroke={D} /><path d="M2 5l7 4 7-4M9 9v8" stroke={D} /></Ic></div>
        <div className="w-[18px]"><Ic w={18} h={18} fly><path d="M9 2l4-2v13l-4-3zM14 0l3 2v9l-3 3z" fill={T} /><path d="M3 7l2.500 2.500L3 12 .5 9.500zM8 9l2.500 2.500L8 14l-2.500-2.500zM3.500 12.500L6 15l-2 2.500-3-3zM9 14l2 2-2 2-2-2z" fill={L} /></Ic></div>
        <Ic w={18} h={18}><path d="M1 13V1h16v13" stroke={L} strokeDasharray="2.500 1.500" /><circle cx="9" cy="9" r="4.500" fill="#444" stroke={T} strokeWidth="1.800" /><path d="M6 13l-5 4" stroke={T} strokeWidth="2.500" /></Ic>
        <div className="w-[18px]"><Ic w={18} h={18} fly><path d="M4.500 9V3.500M8 9V1.500M11.500 9V2M15 11V4" stroke={L} strokeWidth="2.200" strokeLinecap="round" /><path d="M3.400 8H16v6l-3 4H7L0 10.500l1.500-1L3.400 11z" fill={L} /></Ic></div>
        <div className="w-[18px]"><Ic w={18} h={18} fly><circle cx="8" cy="8" r="6.800" fill={L} /><path d="M8 8V1.200A6.800 6.800 0 0 0 1.200 8Z" fill={T} /><path d="M1 16.500C8 16 16 8 17 1" stroke={D} strokeWidth="3" /><path d="M1 16.500C8 16 16 8 17 1" stroke={L} strokeWidth="1.500" /></Ic></div>
        <Ic w={17} h={17}><path d="M0 0h17v17H0z" fill={L} /><path d="M1 9h7v7H1z" fill="#333" /><path d="M8 9l6-6M9 3h5v5" stroke="#333" strokeWidth="1.800" /></Ic>
      </div>
    </div>
  );
}

const Adobe = ({ t, c }: { t: string; c: string }) => (
  <div className={"flex h-[27px] w-7 items-center justify-center border-2 pb-px font-['Open_Sans'] text-[15px] font-medium " + c}>{t}</div>
);
const running = (x: number, w: number): Item => [x, w, <i className="h-[3px] w-full bg-[#90e0e4]" />];

function Taskbar() {
  return (
    <div className="relative h-[50px] shrink-0 overflow-hidden bg-black">
      <div className="flex h-full items-center bg-linear-to-r from-[#050505] via-[#0b0c0b] to-[#050505]">
        <Strip className="h-[50px]" items={[
          [20, 20, <svg width="20" height="20" viewBox="0 0 20 20"><path d="M0 3l8.500-1.300v7.800H0zM9.500 1.500L20 0v9.500H9.500zM0 10.500h8.500v7.800L0 17zM9.500 10.500H20V20L9.500 18.500z" fill="#fff" /></svg>],
          [60, 430, <div className="flex h-[50px] w-[430px] items-center bg-[#f2f2f2] pl-[11px] text-[18px] text-[#3a3a3a]">
            <svg width="28" height="28" viewBox="0 0 28 28" fill="none"><circle cx="14" cy="14" r="11.800" stroke="#000" strokeWidth="3.500" /></svg>
            <Fit w={246} className="ml-[11px] font-['Open_Sans']">Scrivi qui per eseguire la ricerca</Fit>
            <svg width="14" height="20" viewBox="0 0 14 20" fill="none" stroke="#333" strokeWidth="1.600" className="mr-[19px] ml-auto"><path d="M4 1h6v12H4zM1 9v4q0 3 3 3h6q3 0 3-3V9M7 16v3M4 19h6" /></svg></div>],
          [508, 24, <svg width="24" height="20" viewBox="0 0 24 20" fill="none" stroke="#fff" strokeWidth="1.500"><path d="M5 1h14v18H5zM3 4H1v12h2M21 4h2v12h-2" /></svg>],
          [570, 28, <svg width="28" height="24" viewBox="0 0 28 24"><path d="M0 1h11l2 3h15v20H0z" fill="#f7d774" /><path d="M0 6h28v16H0z" fill="#fde596" /><path d="M5 24V15q0-2 2-2h14q2 0 2 2v9h-5v-6h-8v6z" fill="#3ea5d6" /></svg>],
          [632, 28, <svg width="28" height="28" viewBox="0 0 28 28"><path d="M14 4h13v20H14z" fill="#fff" stroke="#2a5699" /><path d="M16 8h9M16 11h9M16 14h9M16 17h9M16 20h9" stroke="#2a5699" /><path d="M0 4L16 1v26L0 24z" fill="#2a5699" /><text x="2" y="19" className="font-['Open_Sans'] text-[13px] font-bold" fill="#fff">W</text></svg>],
          [694, 28, <div className="flex h-[27px] w-7 items-center justify-center border-2 border-[#c4201c] bg-[#2a0606]"><svg width="18" height="18" viewBox="0 0 18 18" fill="none" stroke="#fff" strokeWidth="1.300"><path d="M8 1c2 0 1 5-2 10s-5 6-5 4 6-4 10-4 6 1 6 2-4 1-7-3-4-9-2-9Z" /></svg></div>],
          [755, 30, <div className="h-[30px] w-[30px] bg-[#f8ebe8]"><svg width="30" height="30" viewBox="0 0 30 30"><path d="M4 26L11 4h7l7 22h-6l-1.500-5H12l-2 5z" fill="#b3202a" /><path d="M13 17l2-8 2 8z" fill="#f8ebe8" /><path d="M4 26L14 16l5 1-9 9z" fill="#8a1720" /></svg></div>],
          [802, 61, <div className="flex h-[50px] w-[61px] items-center justify-center border-r-[3px] border-[#2e3130] bg-linear-to-r from-[#3f4343] to-[#565a5a] pl-[3px]">
            <div className="h-[30px] w-[30px] bg-[#eef6f6]"><svg width="30" height="30" viewBox="0 0 30 30"><text x="8" y="20" className="font-['Open_Sans'] text-[23px] font-extrabold" fill="#17979c">3</text><text x="15" y="28" className="font-['Open_Sans'] text-[6px] font-bold" fill="#17979c" textLength="12" lengthAdjust="spacingAndGlyphs">MAX</text></svg></div></div>],
          [880, 28, <Adobe t="Ps" c="border-[#12b0e8] bg-[#04212e] text-[#12b8f0]" />],
          [942, 28, <Adobe t="Ae" c="border-[#c08cf4] bg-[#20063e] text-[#c896fa]" />],
          [1004, 28, <Adobe t="Pr" c="border-[#c45af0] bg-[#24052e] text-[#d06afa]" />],
          [1066, 28, <Adobe t="Id" c="border-[#e23a88] bg-[#300518] text-[#f03c8c]" />],
          [1128, 28, <Adobe t="An" c="border-[#e03c28] bg-[#2c0604] text-[#f0452e]" />],
          [1190, 28, <Adobe t="Ai" c="border-[#e8831c] bg-[#2a1602] text-[#f88c1c]" />],
          [1252, 28, <svg width="28" height="28" viewBox="0 0 28 28"><circle cx="14" cy="14" r="13.500" fill="#f0c52c" /><path d="M2.300 7.200A13.500 13.500 0 0 1 25.700 7.500H14L8.500 17Z" fill="#d8453a" /><path d="M2.300 7.200A13.500 13.500 0 0 0 13 27.500L19.500 17.500 8.500 17.500Z" fill="#3f9f52" /><circle cx="14" cy="14" r="6.500" fill="#fff" /><circle cx="14" cy="14" r="5.200" fill="#4a86e8" /></svg>],
          [1314, 28, <svg width="28" height="28" viewBox="0 0 28 28" fill="none"><circle cx="14" cy="14" r="14" fill="#1ed760" /><path d="M6 10c5-2 12-1.500 16.500 1M7 14.500c5-1.500 10-1 14 1.500M7.500 18.500c4-1 8-1 12 1.500" stroke="#061a0c" strokeWidth="2.500" strokeLinecap="round" /></svg>],
          [1375, 30, <svg width="30" height="30" viewBox="0 0 30 30"><path d="M14 5c8 0 12 6 11 12s-7 11-14 11S-1 21 2 15c1-3 4-2 6-4s1-6 6-6Z" fill="#c4def0" /><circle cx="7" cy="18" r="2.500" fill="#d84040" /><circle cx="10" cy="11" r="2.300" fill="#3cac4a" /><circle cx="16" cy="9" r="2.300" fill="#f0a83c" /><circle cx="12" cy="20" r="2" fill="#111" /><path d="M26 5L17 28" stroke="#b06a2c" strokeWidth="2.500" /><path d="M24 6l1-6 5 3-3 5z" fill="#dca46c" /></svg>],
          [1603, 18, <svg width="18" height="20" viewBox="0 0 18 20" fill="none" stroke="#fff" strokeWidth="1.500"><circle cx="5" cy="9" r="3" /><path d="M0 19c0-8 9-8 9-1" /><circle cx="13" cy="4" r="3" /><path d="M10 12c1-5 7-5 7 1" /></svg>],
          [1649, 16, <svg width="16" height="9" viewBox="0 0 16 9" fill="none" stroke="#fff" strokeWidth="1.500"><path d="M1 8l7-7 7 7" /></svg>],
          [1677, 20, <svg width="20" height="14" viewBox="0 0 20 14"><path d="M4 3h14v9H4z" fill="#fff" stroke="#fff" /><path d="M18 6h2v4h-2zM0 2h7v4q-3 4-7 0zM1 0h1.500v3H1zM4.500 0H6v3H4.500z" fill="#fff" stroke="#000" strokeWidth=".4" /></svg>],
          [1710, 16, <svg width="16" height="16" viewBox="0 0 16 16" fill="none" stroke="#fff" strokeWidth="1.200"><path d="M1 14C2 6 7 2 15 1M4 15C5 9 9 5 15 5M8 15c0-3 3-6 7-6" /><circle cx="13" cy="14" r="1.500" fill="#fff" /></svg>],
          [1737, 20, <svg width="20" height="16" viewBox="0 0 20 16" fill="none" stroke="#fff" strokeWidth="1.200"><path d="M1 5h3l4-4v14l-4-4H1z" /><path d="M11 6q2 2 0 4M13.500 4q3 4 0 8" /><path d="M16 2q5 6 0 12" stroke="#777" /></svg>],
          [1770, 76, <div className="flex flex-col items-center font-['Open_Sans'] text-[15px] leading-[23px] text-white"><Fit w={34}>19:06</Fit><Fit w={76}>30/01/2018</Fit></div>],
          [1869, 30, <svg width="30" height="34" viewBox="0 0 30 34" fill="none"><path d="M0 6h20v16H10l-5 4v-4H0z" fill="#fff" /><path d="M4 10h12M4 13.500h12M4 17h12" stroke="#000" strokeWidth="1.300" /><circle cx="19" cy="24" r="10" fill="#2c2c2c" stroke="#888" /><text x="15" y="29.500" className="font-['Open_Sans'] text-[15px]" fill="#fff">1</text></svg>],
          [1914, 1, <i className="h-[50px] w-px bg-[#666]" />],
        ]} />
      </div>
      <Strip className="absolute inset-x-0 bottom-0 h-[3px]" items={[running(559, 51), running(683, 51), running(802, 61), running(1241, 51), running(1303, 51), running(1365, 51)]} />
    </div>
  );
}

export default function App() {
  return (
    <div className="flex h-[1080px] w-[1920px] flex-col overflow-hidden bg-[#444] font-['Noto_Sans','Open_Sans',sans-serif]">
      <header className="flex h-[29px] shrink-0 items-center bg-white">
        <div className="ml-[3px] h-5 w-[17px] bg-linear-to-br from-[#eaf5f5] to-[#cfe6e6]">
          <svg width="17" height="20" className="overflow-visible"><text x="4" y="13" className="font-['Open_Sans'] text-[15px] font-extrabold" fill="#148a92">3</text><text x="8" y="18.500" className="text-[4px] font-bold" fill="#148a92" textLength="8">MAX</text></svg>
        </div>
        <Fit w={411} className="ml-[7px] font-['Open_Sans'] text-[15px] text-black">PEZZO ASTA1.max - Autodesk 3ds Max 2018 - Student Version</Fit>
        <svg width="12" height="12" className="ml-auto" stroke="#000"><path d="M0 6.500h12" /></svg>
        <svg width="13" height="13" className="ml-[46px]" stroke="#000" fill="none"><path d="M.5 3.500h9v9h-9zM3.500 3.500v-3h9v9h-3" /></svg>
        <svg width="12" height="12" className="mr-[26px] ml-[46px]" stroke="#000" strokeWidth="1.200"><path d="M.5.5l11 11M11.500.5l-11 11" /></svg>
      </header>
      <Strip items={menus} className="h-[27px] shrink-0 border-t border-b border-t-[#466046] border-b-[#111] bg-linear-to-b from-[#555] to-[#454545] pb-[2px] text-[14px] text-[#eaeaea]" />
      <Strip items={toolbar} className="h-[40px] shrink-0" />
      <div className="flex shrink-0">
        <GripV className="mt-[2px] mr-[6px] ml-[2px] h-[46px]" />
        <div className="flex flex-1 flex-col">
          <div className="flex h-[25px] shrink-0 border-t border-l border-[#707070] bg-[#515151]">
            <Strip from={12} className="w-full border-b border-[#2c2c2c] text-[14px] text-[#9c9c9c]" items={[
              [15, 102, <div className="mt-[3px] flex h-[21px] w-[102px] items-center rounded-t-[3px] border border-b-0 border-[#303030] bg-linear-to-b from-[#707070] to-[#5c5c5c] pb-[2px] pl-[26px] text-[#d2d2d2]"><Fit w={63}>Modeling</Fit></div>],
              tx(146, 205, "Freeform"), tx(262, 323, "Selection"), tx(380, 460, "Object Paint"), tx(516, 574, "Populate"),
              [614, 17, <div className="flex h-[10px] w-[17px] items-center justify-center rounded-[3px] bg-[#e8e8ee]"><svg width="7" height="4"><path d="M0 0h7L3.500 4z" fill="#333" /></svg></div>],
              [638, 6, <svg width="6" height="4"><path d="M0 0h6L3 4z" fill="#bbb" /></svg>],
            ]} />
          </div>
          <div className="flex h-[23px] shrink-0 items-center border-b border-[#2b2b2b] bg-linear-to-b from-[#464646] to-[#383838] text-[14px] text-[#d6d6d6]">
            <Strip from={11} items={ribbon.map(([a, b, c, d, s]): Item => [a, b - a, <div className="flex h-[22px] w-full items-center border border-[#5e5e5e] bg-linear-to-b from-[#4c4c4c] to-[#404040]"><div style={{ marginLeft: c - a - 1 }}><Fit w={d - c}>{s}</Fit></div></div>])} />
          </div>
        </div>
      </div>
      <main className="flex h-[755px] shrink-0">
        <LeftPanel />
        <Viewport />
        <CommandPanel />
      </main>
      <Strip className="h-[32px] shrink-0 pt-px text-[13px] text-[#d8d8d8]" items={[
        [2, 3, <GripV className="h-6" />],
        [12, 18, <Key w="w-[18px]" h="h-5"><Fit w={8}>{"<"}</Fit></Key>],
        [32, 154, <Key w="w-[154px]" h="h-5"><Fit w={41}>0 / 100</Fit></Key>],
        [188, 18, <Key w="w-[18px]" h="h-5"><Fit w={8}>{">"}</Fit></Key>],
      ]} />
      <TrackBar />
      <Status />
      <Taskbar />
    </div>
  );
}
